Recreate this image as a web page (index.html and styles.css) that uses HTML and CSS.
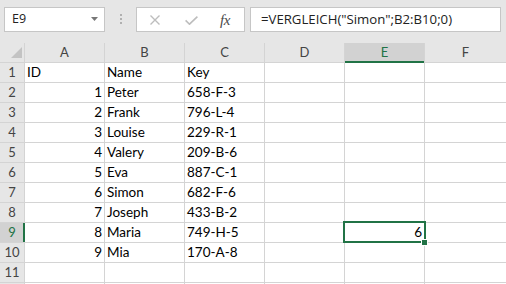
FILE: index.html
```html
<!DOCTYPE html>
<html>
<head>
<meta charset="utf-8">
<link rel="stylesheet" href="styles.css">
</head>
<body>
<div class="app">
  <div class="toolbar">
    <div class="namebox">
      <span class="ref">E9</span>
      <svg class="arrow" width="7" height="4" viewBox="0 0 7 4"><path d="M0 0H7L3.5 4Z" fill="#777"/></svg>
    </div>
    <div class="grip"><i></i><i></i><i></i></div>
    <div class="fxbtns">
      <svg class="ico-x" width="10" height="10" viewBox="0 0 10 10"><path d="M0.5 0.5L9.5 9.5M9.5 0.5L0.5 9.5" stroke="#bdbdbd" stroke-width="1.4" fill="none"/></svg>
      <svg class="ico-check" width="13" height="9" viewBox="0 0 13 9"><path d="M0.6 4.4L4.5 8.2L12.4 0.6" stroke="#bdbdbd" stroke-width="1.6" fill="none"/></svg>
      <span class="fx">fx</span>
    </div>
    <div class="formula">=VERGLEICH("Simon";B2:B10;0)</div>
  </div>
  <div class="sheet">
    <div class="hd corner"><span class="tri"></span></div>
    <div class="hd">A</div><div class="hd">B</div><div class="hd">C</div><div class="hd">D</div><div class="hd sel-col">E</div><div class="hd">F</div>

    <div class="rh">1</div><div class="c">ID</div><div class="c">Name</div><div class="c">Key</div><div class="c"></div><div class="c"></div><div class="c"></div>
    <div class="rh">2</div><div class="c n">1</div><div class="c">Peter</div><div class="c">658-F-3</div><div class="c"></div><div class="c"></div><div class="c"></div>
    <div class="rh">3</div><div class="c n">2</div><div class="c">Frank</div><div class="c">796-L-4</div><div class="c"></div><div class="c"></div><div class="c"></div>
    <div class="rh">4</div><div class="c n">3</div><div class="c">Louise</div><div class="c">229-R-1</div><div class="c"></div><div class="c"></div><div class="c"></div>
    <div class="rh">5</div><div class="c n">4</div><div class="c">Valery</div><div class="c">209-B-6</div><div class="c"></div><div class="c"></div><div class="c"></div>
    <div class="rh">6</div><div class="c n">5</div><div class="c">Eva</div><div class="c">887-C-1</div><div class="c"></div><div class="c"></div><div class="c"></div>
    <div class="rh">7</div><div class="c n">6</div><div class="c">Simon</div><div class="c">682-F-6</div><div class="c"></div><div class="c"></div><div class="c"></div>
    <div class="rh">8</div><div class="c n">7</div><div class="c">Joseph</div><div class="c">433-B-2</div><div class="c"></div><div class="c"></div><div class="c"></div>
    <div class="rh sel-row">9</div><div class="c n">8</div><div class="c">Maria</div><div class="c">749-H-5</div><div class="c"></div><div class="c n active">6<span class="handle"></span></div><div class="c"></div>
    <div class="rh">10</div><div class="c n">9</div><div class="c">Mia</div><div class="c">170-A-8</div><div class="c"></div><div class="c"></div><div class="c"></div>
    <div class="rh">11</div><div class="c"></div><div class="c"></div><div class="c"></div><div class="c"></div><div class="c"></div><div class="c"></div>
    <div class="rh"></div><div class="c"></div><div class="c"></div><div class="c"></div><div class="c"></div><div class="c"></div><div class="c"></div>
  </div>
</div>
</body>
</html>
```
FILE: styles.css
```css
html, body {
  margin: 0;
  padding: 0;
  background: #e6e6e6;
}
.app {
  width: 506px;
  height: 284px;
  overflow: hidden;
  background: #e6e6e6;
}
.toolbar {
  box-sizing: border-box;
  height: 43px;
  padding: 7px 0 0 4px;
  display: flex;
  align-items: flex-start;
}
.namebox {
  box-sizing: border-box;
  width: 101px;
  height: 25px;
  background: #fff;
  border: 1px solid #c6c6c6;
  display: flex;
  align-items: center;
  justify-content: space-between;
  padding: 0 6px 1px 7px;
}
.ref {
  font-family: "Open Sans", sans-serif;
  font-size: 12.5px;
  color: #222;
  line-height: 16px;
}
.arrow { display: block; }
.grip {
  width: 2px;
  margin: 7px 14px 0 15px;
  display: flex;
  flex-direction: column;
  gap: 2px;
}
.grip i {
  display: block;
  width: 2px;
  height: 2px;
  background: #b0b0b0;
}
.fxbtns {
  box-sizing: border-box;
  width: 109px;
  height: 25px;
  background: #fff;
  border: 1px solid #c6c6c6;
  display: flex;
  align-items: center;
  padding-left: 13px;
}
.ico-x { display: block; margin-right: 25px; margin-top: 1px; }
.ico-check { display: block; margin-right: 22px; margin-top: 2px; }
.fx {
  font-family: "Liberation Serif", serif;
  font-style: italic;
  font-size: 15px;
  color: #4a4a4a;
  line-height: 16px;
  letter-spacing: -0.5px;
}
.formula {
  box-sizing: border-box;
  width: 251px;
  height: 25px;
  margin-left: 5px;
  background: #fff;
  border: 1px solid #c6c6c6;
  padding: 0 0 0 10px;
  font-family: "Open Sans", sans-serif;
  font-size: 13.2px;
  line-height: 22px;
  color: #222;
  white-space: nowrap;
}
.sheet {
  display: grid;
  grid-template-columns: 24px repeat(5, 79px) 1fr;
  grid-template-rows: repeat(13, 19px);
  gap: 1px;
  background: #d4d4d4;
  width: 506px;
  height: 241px;
  overflow: hidden;
  font-family: "Lato", sans-serif;
  font-size: 13.5px;
  line-height: 19px;
  color: #000;
}
.hd, .rh {
  background: #e6e6e6;
  color: #444;
  text-align: center;
  position: relative;
  font-size: 13px;
}
.tri {
  position: absolute;
  right: 2px;
  bottom: 4px;
  width: 0;
  height: 0;
  border-left: 11px solid transparent;
  border-bottom: 11px solid #c3c3c3;
}
.sel-col, .sel-row {
  background: #d2d2d2;
  color: #217346;
}
.sel-col::after {
  content: "";
  position: absolute;
  left: 0;
  right: 0;
  bottom: -1px;
  height: 2px;
  background: #217346;
}
.sel-row::after {
  content: "";
  position: absolute;
  top: 0;
  bottom: 0;
  right: -1px;
  width: 2px;
  background: #217346;
}
.c {
  background: #fff;
  padding: 0 2px;
  white-space: nowrap;
}
.n { text-align: right; }
.active {
  position: relative;
}
.active::after {
  content: "";
  position: absolute;
  left: -2px;
  right: -2px;
  top: -2px;
  bottom: -1px;
  border: 2px solid #217346;
}
.handle {
  position: absolute;
  right: -4px;
  bottom: -4px;
  width: 5px;
  height: 5px;
  background: #217346;
  border: 1px solid #fff;
  z-index: 2;
}
```
